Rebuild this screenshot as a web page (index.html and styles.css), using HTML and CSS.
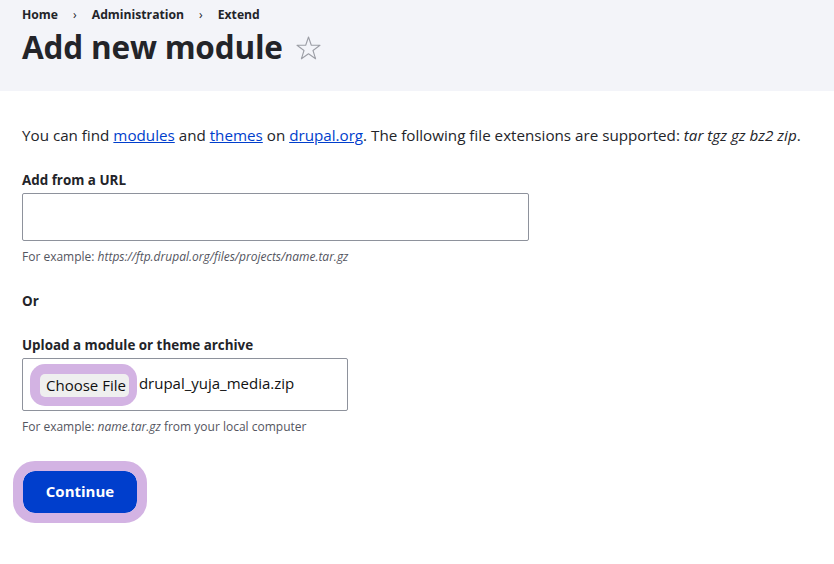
FILE: index.html
```html
<!DOCTYPE html>
<html lang="en">
<head>
  <meta charset="UTF-8" />
  <title>Add new module</title>
  <link rel="stylesheet" href="styles.css">
</head>
<body>
  <div class="page-header">
    <nav class="breadcrumb">
      <a href="#">Home</a>
      <span class="sep">&rsaquo;</span>
      <a href="#">Administration</a>
      <span class="sep">&rsaquo;</span>
      <a href="#">Extend</a>
    </nav>
    <h1 class="page-title">
      Add new module
      <svg class="shortcut" width="25" height="24" viewBox="0 0 25 24">
        <polygon points="12.5,1 15.3,9.2 24,9.3 17,14.5 19.6,22.8 12.5,17.8 5.4,22.8 8,14.5 1,9.3 9.7,9.2" fill="none" stroke="#9c9ea6" stroke-width="1.1" stroke-linejoin="round"/>
      </svg>
    </h1>
  </div>

  <main class="content">
    <p class="intro">
      You can find <a href="#">modules</a> and <a href="#">themes</a> on <a href="#">drupal.org</a>. The following file extensions are supported: <em>tar tgz gz bz2 zip</em>.
    </p>

    <div class="form-item">
      <label class="form-label">Add from a URL</label>
      <input class="form-text" type="text">
      <div class="description">For example: <em>https://ftp.drupal.org/files/projects/name.tar.gz</em></div>
    </div>

    <div class="form-or">Or</div>

    <div class="form-item form-item--upload">
      <label class="form-label">Upload a module or theme archive</label>
      <div class="form-file">
        <span class="file-btn-ring"><span class="file-btn">Choose File</span></span>
        <span class="file-name">drupal_yuja_media.zip</span>
      </div>
      <div class="description">For example: <em>name.tar.gz</em> from your local computer</div>
    </div>

    <div class="actions">
      <button class="button-primary">Continue</button>
    </div>
  </main>
</body>
</html>
```

FILE: styles.css
```css
/* Base */
body, html {
  margin: 0;
  padding: 0;
  background: #fff;
  color: #232429;
  font-family: "Open Sans", "Noto Sans", sans-serif;
}
a {
  color: #232429;
  text-decoration: none;
}
/* Header */
.page-header {
  background: #f3f4f9;
  height: 91px;
  padding: 0 22px;
  box-sizing: border-box;
}
.breadcrumb {
  padding-top: 6px;
  font-size: 12.2px;
  font-weight: 700;
  line-height: 18px;
  display: flex;
}
.breadcrumb .sep {
  margin: 0 15px;
  font-weight: 400;
}
.page-title {
  margin: 3px 0 0;
  font-size: 31.5px;
  line-height: 40px;
  font-weight: 700;
  letter-spacing: -0.2px;
  display: flex;
  align-items: center;
}
.shortcut {
  margin-left: 13px;
  margin-top: 2px;
}
/* Content */
.content {
  padding: 0 22px;
}
.intro {
  margin: 33px 0 0;
  font-size: 15.2px;
  line-height: 22px;
}
.intro a {
  color: #003ecc;
  text-decoration: underline;
}
.form-item {
  margin-top: 25px;
}
.form-label {
  display: block;
  font-size: 13.4px;
  font-weight: 700;
  line-height: 18px;
  margin-bottom: 4px;
}
.form-text {
  display: block;
  width: 507px;
  height: 48px;
  box-sizing: border-box;
  border: 1px solid #8e929c;
  border-radius: 2px;
  margin: 0;
}
.description {
  margin-top: 8px;
  font-size: 12px;
  line-height: 16px;
  color: #545560;
}
.form-or {
  margin-top: 27px;
  font-size: 13.4px;
  font-weight: 700;
  line-height: 18px;
}
.form-item--upload {
  margin-top: 26px;
}
.form-file {
  width: 326px;
  height: 53px;
  box-sizing: border-box;
  border: 1px solid #8e929c;
  border-radius: 2px;
  display: flex;
  align-items: center;
  padding-left: 7px;
}
.file-btn-ring {
  display: inline-flex;
  padding: 10px 8px 9px 10px;
  background: #d3b3e3;
  border-radius: 15px;
  margin-top: 1px;
}
.file-btn {
  background: #efefef;
  border-radius: 5px;
  padding: 1px 3px 2px 6px;
  font-size: 15px;
  line-height: 20px;
  color: #111;
}
.file-name {
  margin-left: 2px;
  font-size: 15px;
  color: #111;
  margin-top: -3px;
}
.actions {
  margin-top: 26px;
  margin-left: -9px;
}
.button-primary {
  font-family: inherit;
  font-size: 15px;
  font-weight: 700;
  color: #fff;
  background: #003ecc;
  border: 10px solid #d3b3e3;
  border-radius: 22px;
  width: 134px;
  height: 62px;
  box-sizing: border-box;
  padding: 0 0 3px;
  cursor: pointer;
  background-clip: padding-box;
}
```
